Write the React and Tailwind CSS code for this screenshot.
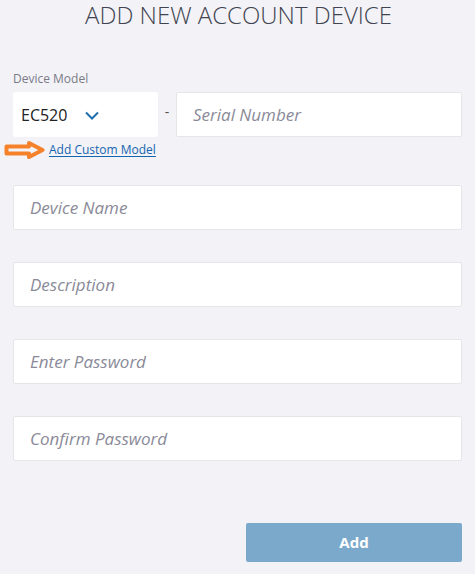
import React from 'react';

const font = { fontFamily: '"Open Sans", "Noto Sans", sans-serif' };

function Field({ placeholder }) {
  return (
    <div className="h-[45px] bg-white border border-[#e6e6ea] rounded-[2px] flex items-center pl-[16px]">
      <span className="text-[17px] italic text-[#8a8a98]">{placeholder}</span>
    </div>
  );
}

export default function App() {
  return (
    <div className="w-[475px] h-[574px] bg-[#f2f2f7] flex flex-col px-[13px] overflow-hidden" style={font}>
      <h1 className="mt-[3px] text-center text-[24px] font-light text-[#3f4450] leading-[24px] pl-[2px]">
        ADD NEW ACCOUNT DEVICE
      </h1>

      <label className="mt-[44px] text-[12px] leading-[16px] text-[#7b7b86]">Device Model</label>
      <div className="mt-[5px] flex items-center">
        <div className="w-[145px] h-[45px] bg-white rounded-[3px] flex items-center pl-[8px]">
          <span className="text-[16px] text-[#222]">EC520</span>
          <svg className="ml-[18px] mt-[2px]" width="14" height="9" viewBox="0 0 14 9" fill="none">
            <path d="M1 1.5 L7 7.5 L13 1.5" stroke="#1d6fb0" strokeWidth="2" />
          </svg>
        </div>
        <span className="w-[18px] text-center text-[14px] text-[#555] -mt-[6px]">-</span>
        <div className="flex-1 h-[45px] bg-white border border-[#e6e6ea] rounded-[2px] flex items-center pl-[16px]">
          <span className="text-[17px] italic text-[#8a8a98]">Serial Number</span>
        </div>
      </div>

      <div className="flex items-center -ml-[9px] mt-[4px] h-[18px]">
        <svg width="42" height="18" viewBox="0 0 42 18" fill="none">
          <path d="M2.5 5.5 L25 5.5 L25 2 L38.5 9 L25 16 L25 12.5 L2.5 12.5 Z" stroke="#f5822a" strokeWidth="4" strokeLinejoin="round" />
        </svg>
        <a href="#" className="ml-[3px] -mt-[1px] text-[12px] leading-[16px] text-[#1565b0] underline underline-offset-[2px]">
          Add Custom Model
        </a>
      </div>

      <div className="mt-[26px] flex flex-col gap-[32px]">
        <Field placeholder="Device Name" />
        <Field placeholder="Description" />
        <Field placeholder="Enter Password" />
        <Field placeholder="Confirm Password" />
      </div>

      <div className="mt-[62px] flex justify-end">
        <button className="w-[216px] h-[39px] bg-[#7aa9cb] rounded-[2px] text-white font-bold text-[15px]">
          Add
        </button>
      </div>
    </div>
  );
}
